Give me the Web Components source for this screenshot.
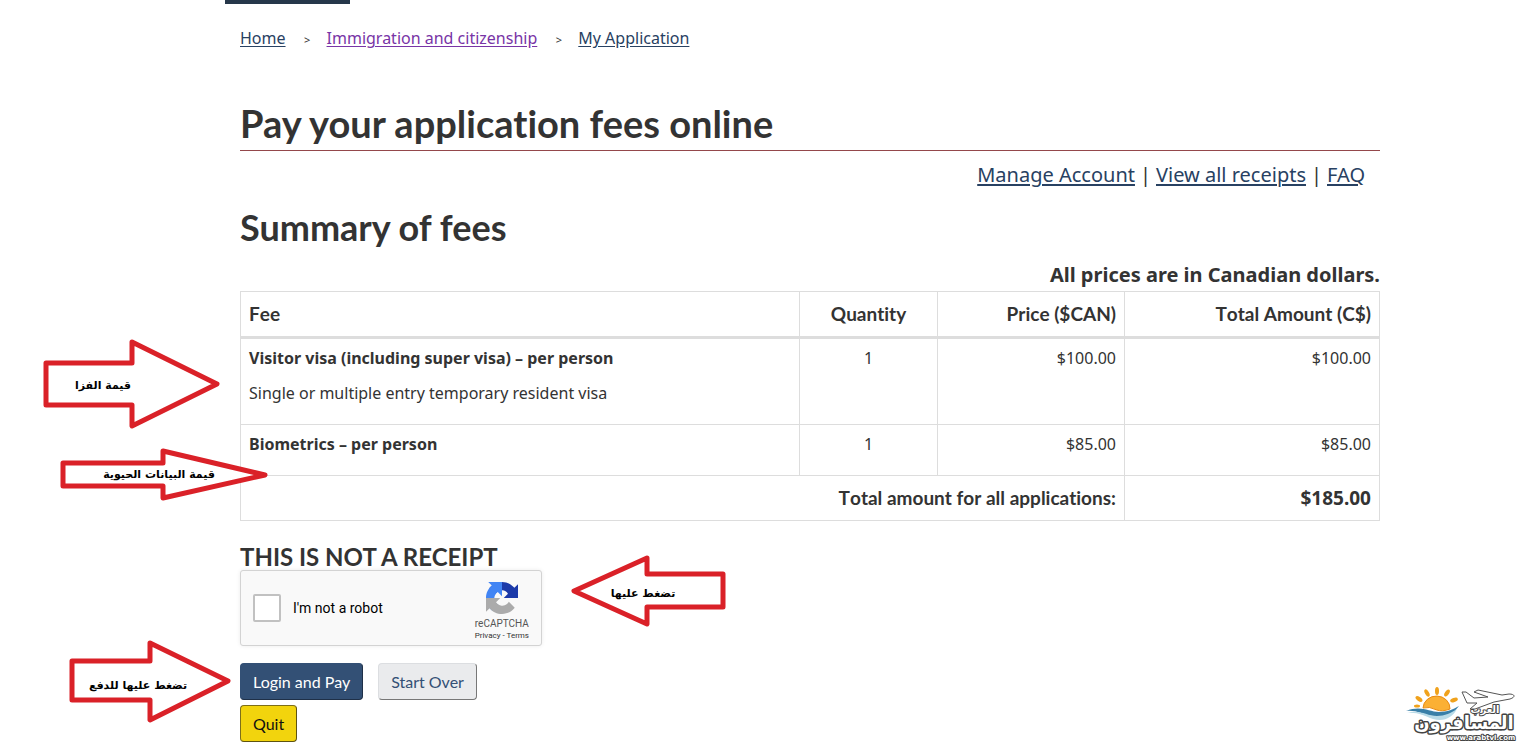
<!DOCTYPE html>
<html lang="en">
<head>
<meta charset="utf-8">
<meta name="viewport" content="width=device-width, initial-scale=1">
<title>Pay your application fees online</title>
<style>
  body { margin: 0; background: #fff; color: #333; font: 16px/23px "Noto Sans", sans-serif; font-variant-ligatures: none; }
</style>
</head>
<body>
<fee-page></fee-page>

<template id="fee-page">
  <style>
    :host { display: block; position: relative; padding: 0 126px 4px 225px; --ink: #333; }
    .tab { width: 125px; height: 4px; background: #26374a; }
    main { padding: 0 15px; }
    h1, h2, h3 { font-family: Lato, sans-serif; font-weight: 700; margin: 0; color: var(--ink); font-variant-ligatures: none; }
    h1 { font-size: 38px; line-height: 46px; margin-top: 48px; padding-bottom: 4px; border-bottom: 1px solid #94484b; }
    h2 { font-size: 36px; line-height: 40px; margin-top: 18px; }
    h3 { font-size: 24px; line-height: 26px; margin-top: 23px; }
    .note { margin: 14px 0 2px; text-align: right; font-size: 20px; line-height: 28px; font-weight: 700; }
    crumb-trail { margin-top: 22px; }
    account-links { margin-top: 10px; }
    .actions { display: flex; gap: 15px; margin-top: 17px; }
    .actions + .actions { margin-top: 5px; }
    call-out { position: absolute; }
    .visa { left: 42px; top: 338px; }
    .bio { left: 59px; top: 447px; }
    .robot { left: 570px; top: 554px; }
    .login { left: 68px; top: 639px; }
    site-mark { position: absolute; right: 6px; bottom: 4px; }
  </style>
  <div class="tab"></div>
  <main>
    <crumb-trail></crumb-trail>
    <h1>Pay your application fees online</h1>
    <account-links></account-links>
    <h2>Summary of fees</h2>
    <p class="note">All prices are in Canadian dollars.</p>
    <fee-table></fee-table>
    <h3>THIS IS NOT A RECEIPT</h3>
    <robot-check></robot-check>
    <div class="actions">
      <action-button kind="primary">Login and Pay</action-button>
      <action-button kind="plain">Start Over</action-button>
    </div>
    <div class="actions"><action-button kind="quit">Quit</action-button></div>
  </main>
  <call-out class="visa" width="180" height="92" points="4,25 90,25 90,4 175,46 90,88 90,67 4,67" inset="58" drop="4">قيمة الفزا</call-out>
  <call-out class="bio" width="210" height="56" points="4,16 104,16 104,4 206,28 104,51 104,39 4,39" inset="10" drop="0">قيمة البيانات الحيوية</call-out>
  <call-out class="robot" width="156" height="74" points="153,20 77,20 77,4 4,37 77,70 77,53 153,53" inset="10" drop="6">تضغط عليها</call-out>
  <call-out class="login" width="164" height="85" points="4,22 82,22 82,4 160,42 82,81 82,61 4,61" inset="24" drop="8">تضغط عليها للدفع</call-out>
  <site-mark></site-mark>
</template>

<template id="crumb-trail">
  <style>
    :host { display: block; }
    ol { display: flex; list-style: none; margin: 0; padding: 0; line-height: 24px; }
    li + li::before { content: ">"; display: inline-block; width: 41px; padding-left: 2px; box-sizing: border-box; text-align: center; font-size: 11px; }
    a { color: #284162; text-underline-offset: 2px; }
    a.seen { color: #7834a6; }
  </style>
  <nav aria-label="Breadcrumb"><ol>
    <li><a href="#home">Home</a></li>
    <li><a class="seen" href="#immigration">Immigration and citizenship</a></li>
    <li><a href="#application">My Application</a></li>
  </ol></nav>
</template>

<template id="account-links">
  <style>
    :host { display: block; }
    ul { display: flex; justify-content: flex-end; list-style: none; margin: 0; padding: 0 15px; font-size: 20px; line-height: 28px; }
    li + li::before { content: "|"; padding: 0 5px; }
    a { color: #284162; text-underline-offset: 2px; }
  </style>
  <nav aria-label="Account"><ul>
    <li><a href="#account">Manage Account</a></li>
    <li><a href="#receipts">View all receipts</a></li>
    <li><a href="#faq">FAQ</a></li>
  </ul></nav>
</template>

<template id="fee-table">
  <style>
    :host { display: block; }
    table { width: 100%; border-collapse: collapse; table-layout: fixed; }
    col.qty { width: 138px; } col.price { width: 187px; } col.total { width: 255px; }
    th, td { border: 1px solid #ddd; padding: 8px; vertical-align: top; text-align: right; }
    thead th, tfoot th, tfoot td { font: 700 19px/28px Lato, sans-serif; font-variant-ligatures: none; font-kerning: none; }
    thead th { border-bottom: 3px solid #ddd; }
    tfoot td { font-family: "Noto Sans", sans-serif; }
    thead th:first-child, tbody th { text-align: left; }
    th:nth-child(2), tbody td:nth-child(2) { text-align: center; }
    tbody th { font-weight: 400; }
    p { margin: 0 0 11px; }
    p + p { margin-top: 12px; }
  </style>
  <table>
    <colgroup><col><col class="qty"><col class="price"><col class="total"></colgroup>
    <thead><tr><th scope="col">Fee</th><th scope="col">Quantity</th><th scope="col">Price ($CAN)</th><th scope="col">Total Amount (C$)</th></tr></thead>
    <tbody>
      <tr><th scope="row"><p><strong>Visitor visa (including super visa) – per person</strong></p><p>Single or multiple entry temporary resident visa</p></th><td>1</td><td>$100.00</td><td>$100.00</td></tr>
      <tr><th scope="row"><p><strong>Biometrics – per person</strong></p></th><td>1</td><td>$85.00</td><td>$85.00</td></tr>
    </tbody>
    <tfoot><tr><th scope="row" colspan="3">Total amount for all applications:</th><td>$185.00</td></tr></tfoot>
  </table>
</template>

<template id="robot-check">
  <style>
    :host { display: flex; align-items: center; box-sizing: border-box; width: 302px; height: 76px; padding: 0 12px; background: #f9f9f9; border: 1px solid #d3d3d3; border-radius: 3px; box-shadow: 0 0 4px rgba(0,0,0,.08); font-family: Roboto, sans-serif; color: #000; }
    label { display: flex; align-items: center; gap: 12px; flex: 1; font-size: 14px; line-height: 17px; }
    input { appearance: none; width: 28px; height: 28px; margin: 0; background: #fff; border: 2px solid #c1c1c1; border-radius: 2px; }
    .brand { display: flex; flex-direction: column; align-items: center; padding-top: 8px; color: #555; font-size: 10px; line-height: 12px; }
    svg { width: 32px; height: 32px; margin-bottom: 4px; }
    .legal { font-size: 8px; color: #333; }
    .legal a { color: inherit; text-decoration: none; }
  </style>
  <label><input type="checkbox">I'm not a robot</label>
  <div class="brand">
    <svg viewBox="0 0 64 64" aria-hidden="true">
      <path fill="#1c3aa9" d="M64 32c0-.5 0-.9 0-1.400V4.500l-7.200 7.200C50.900 4.500 42 0 32 0 21.600 0 12.300 5 6.500 12.700l11.800 11.900c1.200-2.100 2.700-4 4.600-5.300 2-1.500 4.800-2.800 8.600-2.800.5 0 .8.100 1.100.200 4.800.400 8.900 3 11.300 6.800L35.500 32H64z"/>
      <path fill="#4285f4" d="M32 0H4.500l7.200 7.200C4.500 13.100 0 22 0 32c0 10.400 5 19.700 12.700 25.500l11.900-11.800c-2.100-1.200-4-2.700-5.300-4.600-1.500-2-2.800-4.800-2.800-8.600 0-.5.100-.8.200-1.100.4-4.800 3-8.900 6.800-11.300L32 28.500V0z"/>
      <path fill="#ababab" d="M0 32v27.500l7.200-7.200C13.100 59.500 22 64 32 64c10.400 0 19.700-5 25.500-12.700L45.700 39.400c-1.200 2.100-2.700 4-4.600 5.300-2 1.500-4.800 2.800-8.600 2.800-.5 0-.8-.1-1.100-.2-4.800-.4-8.900-3-11.300-6.800L28.500 32H0z"/>
    </svg>
    <span>reCAPTCHA</span>
    <span class="legal"><a href="#privacy">Privacy</a> - <a href="#terms">Terms</a></span>
  </div>
</template>

<template id="action-button">
  <style>
    :host { display: block; }
    button { font: 16px/23px Lato, sans-serif; font-variant-ligatures: none; padding: 6px 12px; border-radius: 4px; border: 1px solid; cursor: pointer; display: block; }
    :host([kind="primary"]) button { background: #335075; color: #fff; border-color: #335075 #1f3048 #1f3048 #335075; }
    :host([kind="plain"]) button { background: #eaebed; color: #335075; border-color: #dcdee1 #777 #777 #dcdee1; }
    :host([kind="quit"]) button { background: #f2d40d; color: #111; border-color: #7d6f1a #5e5310 #5e5310 #7d6f1a; }
  </style>
  <button type="button"><slot></slot></button>
</template>

<template id="call-out">
  <style>
    :host { display: grid; place-items: center; pointer-events: none; font-variant-ligatures: normal; }
    svg, span { grid-area: 1 / 1; }
    svg { display: block; }
    polygon { fill: #fff; stroke: #da2128; stroke-width: 5px; stroke-linejoin: round; }
    span { font: 700 11px/14px "DejaVu Sans", sans-serif; color: #000; white-space: nowrap; }
  </style>
  <svg aria-hidden="true"><polygon/></svg>
  <span dir="rtl" lang="ar"><slot></slot></span>
</template>

<template id="site-mark">
  <style>
    :host { display: block; font-variant-ligatures: normal; }
    svg { display: block; width: 110px; height: 54px; overflow: visible; }
    text { font-family: "DejaVu Sans", sans-serif; font-weight: 700; fill: #fff; stroke: #444; paint-order: stroke; stroke-linejoin: round; text-anchor: middle; direction: rtl; }
    .url { direction: ltr; }
  </style>
  <svg viewBox="0 0 110 54" role="img" aria-label="العرب المسافرون">
    <g fill="#f0a21c">
      <path d="M18 20a13 12 0 0 1 27 1q-8 3-13 1-8-4-14-2z" fill="#fbb034" stroke="#e88b13"/>
      <ellipse cx="32" cy="3" rx="2" ry="4"/>
      <ellipse cx="22" cy="5" rx="2" ry="4" transform="rotate(-30 22 5)"/>
      <ellipse cx="42" cy="5" rx="2" ry="4" transform="rotate(35 42 5)"/>
      <ellipse cx="14" cy="11" rx="4" ry="2" transform="rotate(35 14 11)"/>
      <ellipse cx="49" cy="12" rx="4" ry="2" transform="rotate(-20 49 12)"/>
      <ellipse cx="12" cy="18" rx="3" ry="1.500"/>
    </g>
    <path d="M1 23c15-6 23 1 33 1 8 0 15-3 20-6-7 9-15 14-27 11-9-3-16-7-26-6z" fill="#397fa8"/>
    <path d="M2 25c12-4 20 3 30 3 8 0 14-3 20-7-5 9-13 13-24 10-9-3-15-7-26-6z" fill="#b9dbe8"/>
    <path d="M57 4l4 0 8 6 14 -1-14-5 4-2 24 5 7-1c6 0 7 3 1 5l-16 3-19 7-5 0 7-6-10 0z" fill="#fff" stroke="#555" stroke-width="1"/>
    <text x="80" y="25" font-size="10" stroke-width="2">العرب</text>
    <text x="59" y="41" font-size="18" stroke-width="3">المسافرون</text>
    <text class="url" x="76" y="52" font-size="7" stroke-width="2">www.arabtvl.com</text>
  </svg>
</template>

<script>
  class TemplateElement extends HTMLElement {
    constructor() {
      super();
      const source = document.getElementById(this.localName);
      this.attachShadow({ mode: "open" }).append(source.content.cloneNode(true));
    }
  }

  /* An arrow outline with a caption; inset and drop pad the caption away from the arrow's centre. */
  class CallOut extends TemplateElement {
    connectedCallback() {
      const svg = this.shadowRoot.querySelector("svg");
      svg.setAttribute("width", this.getAttribute("width"));
      svg.setAttribute("height", this.getAttribute("height"));
      this.shadowRoot.querySelector("polygon").setAttribute("points", this.getAttribute("points"));
      const caption = this.shadowRoot.querySelector("span");
      caption.style.paddingRight = this.getAttribute("inset") + "px";
      caption.style.paddingTop = this.getAttribute("drop") + "px";
    }
  }

  for (const name of ["crumb-trail", "account-links", "fee-table", "robot-check", "action-button", "site-mark"]) {
    customElements.define(name, class extends TemplateElement {});
  }
  customElements.define("call-out", CallOut);
  customElements.define("fee-page", class extends TemplateElement {});
</script>
</body>
</html>
